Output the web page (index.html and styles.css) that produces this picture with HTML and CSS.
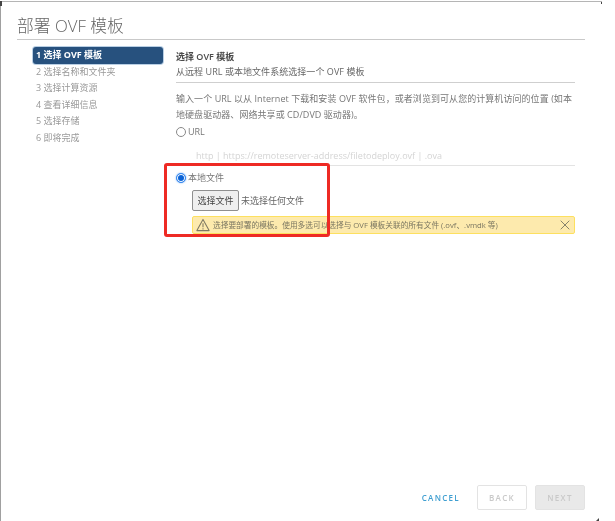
FILE: index.html
```html
<!DOCTYPE html>
<html lang="zh">
<head>
<meta charset="utf-8">
<title>部署 OVF 模板</title>
<link rel="stylesheet" href="styles.css">
</head>
<body>
<div class="dialog">
  <h1 class="title">部署 OVF 模板</h1>
  <div class="main">
    <ol class="steps">
      <li class="step active">1 选择 OVF 模板</li>
      <li class="step">2 选择名称和文件夹</li>
      <li class="step">3 选择计算资源</li>
      <li class="step">4 查看详细信息</li>
      <li class="step">5 选择存储</li>
      <li class="step">6 即将完成</li>
    </ol>
    <section class="content">
      <div class="head">
        <h2 class="head-title">选择 OVF 模板</h2>
        <p class="head-sub">从远程 URL 或本地文件系统选择一个 OVF 模板</p>
      </div>
      <p class="intro">输入一个 URL 以从 Internet 下载和安装 OVF 软件包，或者浏览到可从您的计算机访问的位置 (如本地硬盘驱动器、网络共享或 CD/DVD 驱动器)。</p>
      <label class="radio-row"><span class="radio"></span>URL</label>
      <div class="url-input">http | https://remoteserver-address/filetodeploy.ovf | .ova</div>
      <label class="radio-row local"><span class="radio on"></span>本地文件</label>
      <div class="file-block">
        <div class="file-row"><span class="file-btn">选择文件</span><span class="file-none">未选择任何文件</span></div>
        <div class="alert">
          <svg class="alert-icon" viewBox="0 0 16 16" width="14" height="14"><path d="M8 1.6 15 14.4H1Z" fill="none" stroke="#7d7862" stroke-width="1.2" stroke-linejoin="round"/><path d="M8 6v4.6M8 11.8v1.2" stroke="#7d7862" stroke-width="1.2"/></svg>
          <span class="alert-text">选择要部署的模板。使用多选可以选择与 OVF 模板关联的所有文件 (.ovf、.vmdk 等)</span>
          <svg class="alert-close" viewBox="0 0 10 10" width="10" height="10"><path d="M.7.7l8.6 8.6M9.3.7.7 9.3" stroke="#86826c" stroke-width="1"/></svg>
        </div>
      </div>
    </section>
  </div>
  <div class="footer">
    <span class="cancel">CANCEL</span>
    <span class="btn back">BACK</span>
    <span class="btn next">NEXT</span>
  </div>
  <div class="highlight"></div>
  <span class="corner corner-tl"></span>
  <span class="corner corner-tr"></span>
  <span class="corner corner-br"></span>
</div>
</body>
</html>
```

FILE: styles.css
```css
* { box-sizing: border-box; }
html, body { margin: 0; padding: 0; background: #fff; }
body { width: 615px; height: 521px; overflow: hidden; font-family: "Open Sans", "Noto Sans CJK SC", sans-serif; }
.dialog {
  position: relative;
  width: 602px;
  height: 520px;
  margin-top: 1px;
  border-top: 1px solid #b5b5b5;
  border-left: 1px solid #a0a0a0;
  padding: 0 17px 0 16px;
  display: flex;
  flex-direction: column;
  filter: blur(.4px);
}
.title {
  margin: 0;
  height: 38px;
  padding-top: 12px;
  border-bottom: 1px solid #c9c9c9;
  font: 300 16.8px/24px "Open Sans", "Noto Sans CJK SC", sans-serif;
  color: #666;
}
.main { display: flex; flex: 1; padding-top: 7px; }
.steps { list-style: none; margin: 0 0 0 16px; padding: 0; width: 130px; flex: none; }
.step {
  height: 16.5px;
  padding-left: 3px;
  font-size: 9px;
  line-height: 16px;
  color: #999;
  white-space: nowrap;
}
.active { background: #27517e; color: #fff; font-weight: 700; border-radius: 3px; box-shadow: 0 0 0 1px #b9cfe4; }
.content { margin-left: 13px; width: 399px; flex: none; padding-top: 2px; }
.head { height: 34px; border-bottom: 1px solid #cfcfcf; }
.head-title { margin: 0; font-size: 9px; line-height: 15px; font-weight: 600; color: #4a4a4a; }
.head-sub { margin: 0; font-size: 9px; line-height: 15px; color: #666; letter-spacing: .05px; }
.intro { margin: 8px 0 0; font-size: 9px; line-height: 16px; color: #777; letter-spacing: .06px; }
.radio-row { display: flex; align-items: center; gap: 2px; height: 17px; font-size: 9px; color: #777; }
.radio { width: 10px; height: 10px; border: 1px solid #888; border-radius: 50%; background: #fff; flex: none; }
.radio.on { border: 1px solid #3b8bf0; background: #0b63d6; box-shadow: inset 0 0 0 1px #fff, 0 0 2px #7ab2f5; }
.url-input {
  margin: 7px 0 0 20px;
  height: 19px;
  border-bottom: 1px solid #e3e3e3;
  font-size: 9px;
  line-height: 17px;
  color: #d4d4d4;
}
.local { margin-top: 3px; }
.file-block { padding: 4px 0 0 16px; }
.file-row { display: flex; align-items: center; height: 21px; font-size: 9px; color: #666; }
.file-btn {
  width: 47px;
  height: 21px;
  line-height: 19px;
  text-align: center;
  background: #efefef;
  border: 1px solid #8f8f8f;
  border-radius: 2px;
  color: #444;
}
.file-none { margin-left: 2px; }
.alert {
  margin-top: 5px;
  height: 18px;
  display: flex;
  align-items: center;
  background: #fdeaad;
  border: 1px solid #fde05f;
  border-radius: 2px;
  padding: 0 3px 0 3px;
}
.alert-icon { flex: none; }
.alert-text { margin-left: 3px; flex: 1; font-size: 7.7px; line-height: 16px; color: #7a7661; white-space: nowrap; }
.alert-close { flex: none; margin-right: 1px; }
.footer {
  display: flex;
  align-items: center;
  justify-content: flex-end;
  height: 25px;
  margin-bottom: 11px;
  font-size: 8px;
  font-weight: 600;
  letter-spacing: 1.3px;
}
.cancel { color: #3f9fd1; margin-right: 17px; }
.btn { width: 50px; height: 25px; line-height: 23px; text-align: center; border: 1px solid #e3e3e3; border-radius: 2px; color: #c9c9c9; }
.next { background: #e9e9e9; margin-left: 8px; }
.highlight {
  position: absolute;
  left: 163px;
  top: 161px;
  width: 166px;
  height: 74px;
  border: 3px solid #ee2a24;
  border-radius: 3px;
}
.corner { position: absolute; background: #444; }
.corner-tl { left: -1px; top: -1px; width: 2px; height: 5px; }
.corner-tr { right: 0; top: 0; width: 1px; height: 2px; }
.corner-br { right: 3px; bottom: 0; width: 3px; height: 3px; clip-path: polygon(100% 0, 100% 100%, 0 100%); }
```
